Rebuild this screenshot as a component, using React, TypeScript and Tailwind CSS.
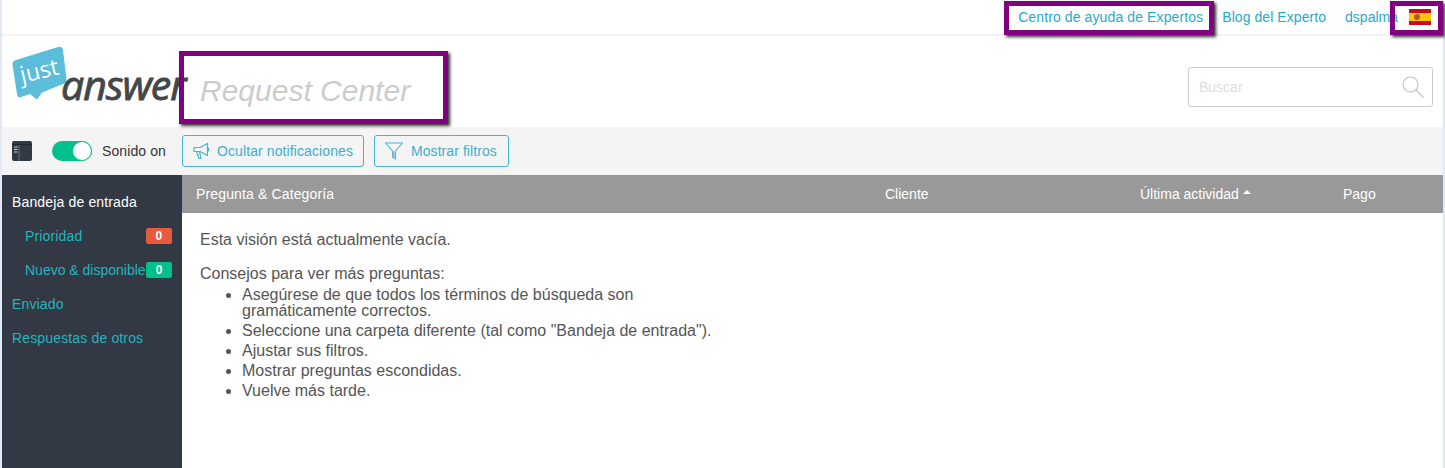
import React from "react";

const sans = "font-['Liberation_Sans',Arial,sans-serif]";

const Logo = () => (
  <svg width="180" height="62" viewBox="0 0 180 62" className="block overflow-visible">
    <path
      d="M0.500 19 Q0 15 4 14 L46 1 Q50 0 51 4 L54.500 33 Q55 37 51 38 L30 46.500 L25 53.500 L18 48 L9 51 Q5.500 52 5 48 Z"
      fill="#5bbdd9"
    />
    <text
      x="10"
      y="37"
      transform="rotate(-13 10 37)"
      fill="#fff"
      fontSize="23"
      className="font-['Open_Sans',sans-serif]"
    >
      just
    </text>
    <text
      x="49"
      y="54"
      fill="#444648"
      fontSize="41"
      fontStyle="italic"
      letterSpacing="-1"
      className="font-['Open_Sans',sans-serif]"
      stroke="#444648"
      strokeWidth="0.9"
    >
      answer
    </text>
  </svg>
);

const PanelIcon = () => (
  <svg width="20" height="20" viewBox="0 0 20 20">
    <rect width="20" height="20" rx="2" fill="#323945" />
    <path d="M0 3.500H20" stroke="#232832" strokeWidth="1" />
    <path d="M7 4V20" stroke="#6a7482" strokeWidth="1" />
    <path d="M2 6H5.500M2 8.500H5.500M2 11H5.500" stroke="#c9ced6" strokeWidth="1" />
  </svg>
);

const MegaphoneIcon = () => (
  <svg width="18" height="18" viewBox="0 0 18 18" fill="none" stroke="#41b8d5" strokeWidth="1.200">
    <path d="M1 5.500H7L14.500 1.500V13.500L7 9.500H1Z" strokeLinejoin="round" />
    <path d="M3.500 9.500L6 16.500H8L6.500 9.500" strokeLinejoin="round" />
    <path d="M14.500 5.500Q17 7.500 14.500 9.500" />
  </svg>
);

const FilterIcon = () => (
  <svg width="18" height="18" viewBox="0 0 18 18" fill="none" stroke="#41b8d5" strokeWidth="1.100">
    <path d="M0.500 1H17.500L10.500 9V17L7.500 15V9Z" strokeLinejoin="round" />
    <path d="M8.500 9.500V15.500" stroke="#9aa9c9" strokeWidth="2" />
  </svg>
);

const SearchIcon = () => (
  <svg width="22" height="22" viewBox="0 0 22 22" fill="none" stroke="#b9c2cc" strokeWidth="1.100">
    <circle cx="8.500" cy="8.500" r="7.500" />
    <path d="M14 14L21.500 21.500" />
  </svg>
);

const Flag = () => (
  <div className="flex h-4 w-[22px] flex-col">
    <div className="h-1 bg-[#c60b1e]" />
    <div className="flex h-2 items-center bg-[#ffc400] pl-[5px]">
      <div className="h-[6px] w-[6px] rounded-full bg-[#ad5a2c]" />
    </div>
    <div className="h-1 bg-[#c60b1e]" />
  </div>
);

// purple boxes someone drew on top of the page
const Highlight = ({ className }: { className: string }) => (
  <div
    className={`pointer-events-none absolute border-[5px] border-[#800080] shadow-[2px_2px_3px_#333] ${className}`}
  />
);

const App = () => {
  return (
    <div className={`relative h-[468px] w-[1445px] overflow-hidden bg-[#deeaf5] pl-[2px] text-sm ${sans}`}>
      <div className="flex h-full flex-col">
        <div className="flex h-9 w-[1443px] items-center justify-end border-b-2 border-[#f3f3f3] bg-white pr-[14px] text-[#29a9cc]">
          <span className="mr-[19px] tracking-[0.11px]">Centro de ayuda de Expertos</span>
          <span className="mr-[19px] tracking-[0.07px]">Blog del Experto</span>
          <span className="mr-[11px]">dspalma</span>
          <Flag />
        </div>

        <div className="mr-[2px] flex h-[91px] items-center justify-between bg-white pl-[10px] pr-[10px]">
          <div className="flex items-center">
            <div className="mt-[-10px] w-[188px]">
              <Logo />
            </div>
            <span className="mt-[18px] text-[30px] italic leading-none text-[#ccc]">Request Center</span>
          </div>
          <div className="mt-[10px] flex h-10 w-[245px] items-center justify-between rounded-[3px] border border-[#ccc] pl-[10px] pr-2 text-[#ddd]">
            <span>Buscar</span>
            <SearchIcon />
          </div>
        </div>

        <div className="mr-[2px] flex h-12 items-center bg-[#f4f4f4] pl-[10px]">
          <PanelIcon />
          <div className="ml-5 flex h-5 w-10 justify-end rounded-full bg-[#00c08b]">
            <div className="size-5 rounded-full border border-[#00c08b] bg-white" />
          </div>
          <span className="ml-[10px] w-[64px] tracking-[0.1px] text-[#333]">Sonido on</span>
          <div className="ml-4 flex h-8 w-[182px] items-center rounded-[3px] border border-[#41b8d5] pl-[10px] text-[#41aed0]">
            <MegaphoneIcon />
            <span className="ml-[6px] tracking-[0.1px]">Ocultar notificaciones</span>
          </div>
          <div className="ml-[10px] flex h-8 w-[135px] items-center rounded-[3px] border border-[#41b8d5] pl-[10px] text-[#41aed0]">
            <FilterIcon />
            <span className="ml-2 tracking-[0.07px]">Mostrar filtros</span>
          </div>
        </div>

        <div className="mr-[2px] flex min-h-0 flex-1">
          <div className="flex w-[180px] flex-col bg-[#323945] pl-[10px] pr-[10px] pt-[10px] text-[#22b5bd] tracking-[0.15px]">
            <div className="flex h-[34px] items-center text-white">Bandeja de entrada</div>
            <div className="flex h-[34px] items-center justify-between pl-[13px]">
              <span>Prioridad</span>
              <span className="flex h-4 w-[26px] items-center justify-center rounded-[2px] bg-[#e9593d] text-xs font-bold text-white">
                0
              </span>
            </div>
            <div className="flex h-[34px] items-center justify-between pl-[13px] tracking-normal">
              <span>Nuevo &amp; disponible</span>
              <span className="flex h-4 w-[26px] items-center justify-center rounded-[2px] bg-[#00c08b] text-xs font-bold text-white">
                0
              </span>
            </div>
            <div className="flex h-[34px] items-center">Enviado</div>
            <div className="flex h-[34px] items-center">Respuestas de otros</div>
          </div>

          <div className="flex-1 bg-white">
            <div className="flex h-[38px] items-center bg-[#999] text-white">
              <span className="ml-[14px] w-[689px] tracking-[0.14px]">Pregunta &amp; Categoría</span>
              <span className="w-[255px]">Cliente</span>
              <span className="flex w-[203px] items-center">
                Última actividad
                <span className="mb-1 ml-1 h-0 w-0 border-x-4 border-b-4 border-x-transparent border-b-white" />
              </span>
              <span>Pago</span>
            </div>
            <div className="pl-[18px] pt-[19px] text-base leading-4 text-[#555]">
              <p>Esta visión está actualmente vacía.</p>
              <p className="mt-[18px]">Consejos para ver más preguntas:</p>
              <ul className="mt-[5px] flex list-disc flex-col gap-1 pl-[42px]">
                <li className="w-[440px]">Asegúrese de que todos los términos de búsqueda son gramáticamente correctos.</li>
                <li>Seleccione una carpeta diferente (tal como "Bandeja de entrada").</li>
                <li>Ajustar sus filtros.</li>
                <li>Mostrar preguntas escondidas.</li>
                <li>Vuelve más tarde.</li>
              </ul>
            </div>
          </div>
        </div>
      </div>

      <Highlight className="left-[1004px] top-px h-[34px] w-[210px]" />
      <Highlight className="left-[1390px] top-px h-[34px] w-[53px]" />
      <Highlight className="left-[179px] top-[51px] h-[73px] w-[269px]" />
    </div>
  );
};

export default App;
